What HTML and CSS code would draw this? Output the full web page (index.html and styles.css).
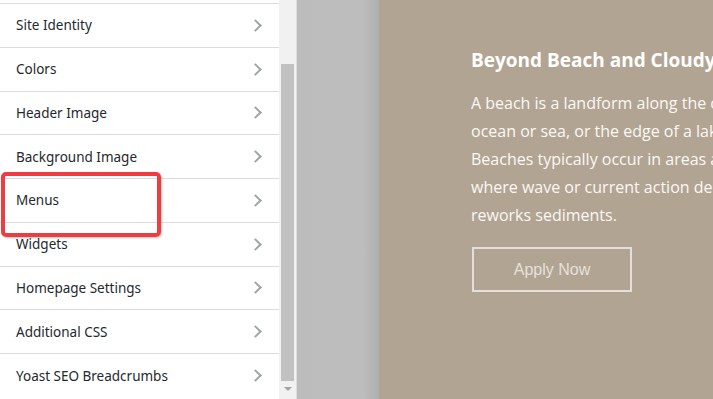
FILE: index.html
```html
<!DOCTYPE html>
<html lang="en">
<head>
  <meta charset="UTF-8">
  <title>Customizer</title>
  <link rel="stylesheet" href="styles.css">
</head>
<body>

  <div class="sidebar">
    <ul class="panelList">
      <li class="panelItem">Site Identity <span class="chev"></span></li>
      <li class="panelItem">Colors <span class="chev"></span></li>
      <li class="panelItem">Header Image <span class="chev"></span></li>
      <li class="panelItem">Background Image <span class="chev"></span></li>
      <li class="panelItem">Menus <span class="chev"></span></li>
      <li class="panelItem">Widgets <span class="chev"></span></li>
      <li class="panelItem">Homepage Settings <span class="chev"></span></li>
      <li class="panelItem">Additional CSS <span class="chev"></span></li>
      <li class="panelItem">Yoast SEO Breadcrumbs <span class="chev"></span></li>
    </ul>
    <div class="highlight"></div>
  </div>

  <div class="scrollbar">
    <div class="thumb"></div>
    <div class="arrowDown"></div>
  </div>

  <div class="gutter"></div>

  <div class="preview">
    <h2 class="heroTitle">Beyond Beach and Cloudy Sky</h2>
    <p class="heroText">A beach is a landform along the coast of an<br>ocean or sea, or the edge of a lake or river.<br>Beaches typically occur in areas along the coast<br>where wave or current action deposits and<br>reworks sediments.</p>
    <a class="applyBtn" href="#">Apply Now</a>
  </div>

</body>
</html>
```

FILE: styles.css
```css
html, body {
  height: 100%;
  margin: 0;
  overflow: hidden;
}

body {
  display: flex;
  background: #bdbdbd;
}

.sidebar {
  position: relative;
  width: 279px;
  flex-shrink: 0;
  background: #ffffff;
  padding-top: 3px;
  box-sizing: border-box;
}

.panelList {
  list-style: none;
  margin: 0;
  padding: 0;
}

.panelItem {
  display: flex;
  align-items: center;
  justify-content: space-between;
  height: 43.78px;
  box-sizing: border-box;
  border-top: 1px solid #dcdcde;
  padding: 0 19px 0 16px;
  font-family: 'Noto Sans', sans-serif;
  font-size: 13.5px;
  color: #23282d;
}

.chev {
  width: 7px;
  height: 7px;
  border-top: 2px solid #a0a5aa;
  border-right: 2px solid #a0a5aa;
  transform: rotate(45deg);
}

.highlight {
  position: absolute;
  left: 1px;
  top: 172px;
  width: 160px;
  height: 65px;
  box-sizing: border-box;
  border: 4px solid #ee3c40;
  border-radius: 5px;
  box-shadow: 1px 1px 2px rgba(0, 0, 0, 0.25);
}

.scrollbar {
  width: 17px;
  flex-shrink: 0;
  background: #f1f1f1;
  display: flex;
  flex-direction: column;
  align-items: center;
}

.thumb {
  margin-top: 64px;
  width: 13px;
  height: 317px;
  background: #c1c1c1;
}

.arrowDown {
  margin-top: 6px;
  width: 0;
  height: 0;
  border-left: 4px solid transparent;
  border-right: 4px solid transparent;
  border-top: 4px solid #a3a3a3;
}

.gutter {
  width: 82px;
  flex-shrink: 0;
  border-left: 1px solid #dedede;
  background: linear-gradient(to right, #bcbcbc 0%, #bdbdbd 80%, #afafaf 100%);
}

.preview {
  flex: 1;
  background: #b2a493;
  padding-left: 92px;
  white-space: nowrap;
  overflow: hidden;
}

.heroTitle {
  margin: 47px 0 0;
  font-family: 'Open Sans', sans-serif;
  font-weight: 700;
  font-size: 19px;
  line-height: 26px;
  color: #ffffff;
}

.heroText {
  margin: 16px 0 0;
  font-family: 'Open Sans', sans-serif;
  font-size: 16px;
  line-height: 28px;
  color: #fbf8f4;
}

.applyBtn {
  display: flex;
  align-items: center;
  justify-content: center;
  margin: 18px 0 0 1px;
  width: 160px;
  height: 45px;
  box-sizing: border-box;
  border: 2px solid #e4dfd8;
  font-family: 'Liberation Sans', Arial, sans-serif;
  font-size: 16px;
  color: #e6e1da;
  text-decoration: none;
}
```
